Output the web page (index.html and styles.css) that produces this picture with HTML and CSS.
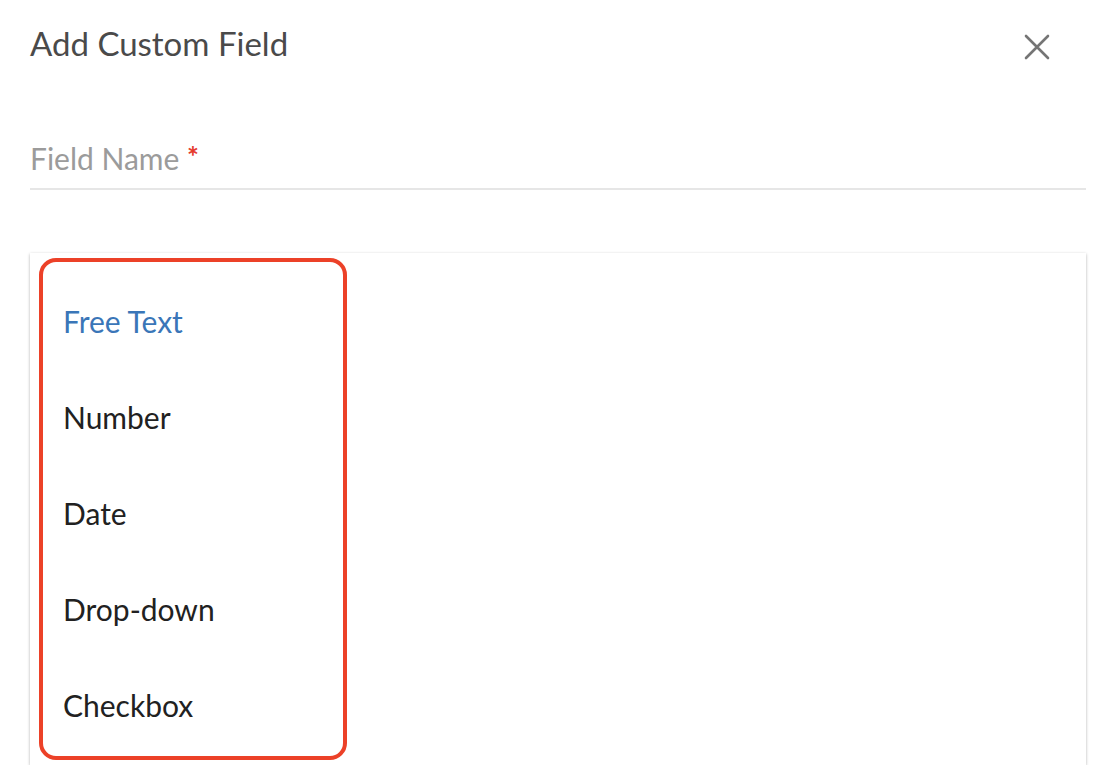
FILE: index.html
```html
<!DOCTYPE html>
<html>
<head>
<meta charset="utf-8">
<link rel="stylesheet" href="styles.css">
</head>
<body>
<div class="dialog">
  <div class="header">
    <h1 class="title">Add Custom Field</h1>
    <button class="close" aria-label="Close">
      <svg width="26" height="26" viewBox="0 0 26 26"><path d="M2 2 L24 24 M24 2 L2 24" stroke="#757575" stroke-width="2.6" stroke-linecap="round" fill="none"/></svg>
    </button>
  </div>
  <div class="field">
    <label class="label">Field Name <span class="req">*</span></label>
  </div>
  <div class="menu">
    <ul class="options">
      <li class="opt active">Free Text</li>
      <li class="opt">Number</li>
      <li class="opt">Date</li>
      <li class="opt">Drop-down</li>
      <li class="opt">Checkbox</li>
    </ul>
  </div>
</div>
</body>
</html>
```
FILE: styles.css
```css
html, body {
  margin: 0;
  padding: 0;
  background: #ffffff;
  font-family: "Lato", "Open Sans", "Liberation Sans", sans-serif;
}
.dialog {
  width: 1056px;
  padding: 0 26px 0 30px;
}
.header {
  display: flex;
  justify-content: space-between;
  align-items: center;
  height: 88px;
}
.title {
  margin: 0;
  margin-top: -2px;
  font-size: 33px;
  font-weight: 400;
  color: #4a4a4a;
}
.close {
  border: 0;
  background: none;
  padding: 0;
  margin-right: 36px;
  margin-top: 6px;
  width: 26px;
  height: 26px;
  display: flex;
}
.field {
  height: 102px;
  border-bottom: 2px solid #e6e6e6;
  box-sizing: border-box;
  display: flex;
  align-items: flex-end;
  padding-bottom: 12px;
}
.label {
  font-size: 30px;
  color: #9b9b9b;
}
.req {
  color: #e53a2c;
  font-size: 28px;
  font-weight: 700;
  vertical-align: 3px;
}
.menu {
  margin-top: 63px;
  height: 512px;
  background: #fff;
  box-shadow: 0 1px 3px rgba(0,0,0,0.28), 0 1px 1px rgba(0,0,0,0.06);
  box-sizing: border-box;
  padding: 5px 0 0 9px;
}
.options {
  list-style: none;
  margin: 0;
  padding: 7px 0;
  width: 300px;
  border: 4px solid #ec4128;
  border-radius: 17px;
}
.opt {
  height: 96px;
  box-sizing: border-box;
  padding-top: 8px;
  display: flex;
  align-items: center;
  padding-left: 20px;
  font-size: 30px;
  color: #212121;
}
.opt.active {
  color: #3a76b8;
}
```
